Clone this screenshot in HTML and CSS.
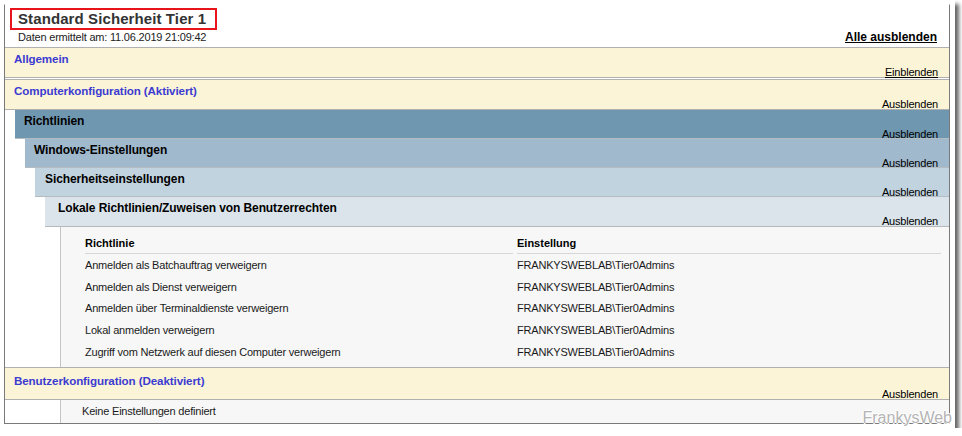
FILE: index.html
```html
<!DOCTYPE html>
<html lang="de">
<head>
    <meta charset="UTF-8">
    <title>Standard Sicherheit Tier 1</title>
    <link rel="stylesheet" href="styles.css">
</head>
<body>
    <div class="shot">
        <div class="report">
            <div class="title-box">Standard Sicherheit Tier 1</div>
            <div class="head-row">
                <span class="stamp">Daten ermittelt am: 11.06.2019 21:09:42</span>
                <a class="toggle-all" href="#">Alle ausblenden</a>
            </div>

            <div class="bar bar-cat">
                <div class="bar-title cat-title">Allgemein</div>
                <div class="expando"><a class="show" href="#">Einblenden</a></div>
            </div>

            <div class="bar bar-cat bar-gap">
                <div class="bar-title cat-title">Computerkonfiguration (Aktiviert)</div>
                <div class="expando">Ausblenden</div>
            </div>
            <div class="nest">
                <div class="bar lvl1">
                    <div class="bar-title">Richtlinien</div>
                    <div class="expando">Ausblenden</div>
                </div>
                <div class="nest">
                    <div class="bar lvl2">
                        <div class="bar-title">Windows-Einstellungen</div>
                        <div class="expando">Ausblenden</div>
                    </div>
                    <div class="nest">
                        <div class="bar lvl3">
                            <div class="bar-title">Sicherheitseinstellungen</div>
                            <div class="expando">Ausblenden</div>
                        </div>
                        <div class="nest">
                            <div class="bar lvl4">
                                <div class="bar-title">Lokale Richtlinien/Zuweisen von Benutzerrechten</div>
                                <div class="expando">Ausblenden</div>
                            </div>
                            <div class="content">
                                <table class="info">
                                    <tr><th>Richtlinie</th><th>Einstellung</th></tr>
                                    <tr><td>Anmelden als Batchauftrag verweigern</td><td>FRANKYSWEBLAB\Tier0Admins</td></tr>
                                    <tr><td>Anmelden als Dienst verweigern</td><td>FRANKYSWEBLAB\Tier0Admins</td></tr>
                                    <tr><td>Anmelden über Terminaldienste verweigern</td><td>FRANKYSWEBLAB\Tier0Admins</td></tr>
                                    <tr><td>Lokal anmelden verweigern</td><td>FRANKYSWEBLAB\Tier0Admins</td></tr>
                                    <tr><td>Zugriff vom Netzwerk auf diesen Computer verweigern</td><td>FRANKYSWEBLAB\Tier0Admins</td></tr>
                                </table>
                            </div>
                        </div>
                    </div>
                </div>
            </div>

            <div class="bar bar-cat bar-user">
                <div class="bar-title cat-title">Benutzerkonfiguration (Deaktiviert)</div>
                <div class="expando">Ausblenden</div>
            </div>
            <div class="empty">Keine Einstellungen definiert</div>
        </div>
        <div class="watermark">FrankysWeb</div>
    </div>
</body>
</html>
```

FILE: styles.css
```css
body {
    margin: 0;
    background: #fff;
    font-family: "Liberation Sans", Arial, sans-serif;
    font-size: 11px;
    letter-spacing: -0.2px;
    color: #000;
}
.shot {
    position: relative;
    width: 955px;
    height: 428px;
    background: #fff;
    box-shadow: 4px 4px 4px rgba(0, 0, 0, 0.6);
}
.report {
    position: absolute;
    left: 4px;
    top: 4px;
    width: 944px;
    height: 418px;
    border: 1px solid #7a7a7a;
    border-top-color: #fff;
    background: #fff;
    overflow: hidden;
}
.title-box {
    width: fit-content;
    margin: 3px 0 0 5px;
    padding: 0 9px 0 6px;
    height: 18px;
    line-height: 18px;
    border: 2px solid #e8141b;
    font-size: 15px;
    font-weight: bold;
    color: #333;
    letter-spacing: 0.1px;
}
.head-row {
    display: flex;
    justify-content: space-between;
    align-items: baseline;
    height: 17px;
    padding: 0 12px 0 13px;
    line-height: 15px;
}
.stamp {
    color: #222;
}
.toggle-all {
    font-size: 12px;
    font-weight: bold;
    letter-spacing: 0;
    color: #000;
    text-decoration: underline;
}
.bar {
    height: 28px;
    padding: 0 11px 0 9px;
    border-bottom: 1px solid #b4bcc2;
}
.bar-title {
    padding-top: 4px;
    height: 14px;
    line-height: 14px;
    font-size: 12px;
    font-weight: bold;
    letter-spacing: -0.1px;
    white-space: nowrap;
}
.expando {
    text-align: right;
    line-height: 12px;
    color: #000;
}
.expando a {
    color: #000;
    text-decoration: underline;
}
.bar-cat {
    height: 29px;
    background: #fcf4d6;
    border-top: 1px solid #b0b0b0;
    border-bottom: 1px solid #b0b0b0;
}
.bar-gap {
    margin-top: 1px;
}
.cat-title {
    font-size: 11.6px;
    color: #3b3bd2;
}
.nest {
    margin-left: 10px;
}
.lvl1 {
    background: #7097b0;
}
.lvl2 {
    background: #a1b9cc;
}
.lvl3 {
    background: #c1d3df;
    padding-left: 10px;
}
.lvl4 {
    height: 29px;
    background: #dae4ea;
    padding-left: 13px;
    border-bottom-color: #b8b8b8;
}
.content {
    height: 135px;
    margin-left: 15px;
    padding-top: 5px;
    background: #f7f7f7;
    border-left: 1px solid #c4c4c4;
}
.info {
    margin-left: 20px;
    border-collapse: separate;
    border-spacing: 4px 0;
}
.info th {
    width: 428px;
    height: 21px;
    padding: 0;
    text-align: left;
    font-weight: bold;
    letter-spacing: 0;
    border-bottom: 1px solid #d6d6d6;
}
.info th + th {
    width: 424px;
}
.info td {
    height: 20.6px;
    padding: 1px 0 0;
    line-height: 14px;
    color: #1a1a1a;
}
.bar-user {
    height: 31px;
}
.bar-user .bar-title {
    padding-top: 6px;
}
.empty {
    margin-left: 55px;
    height: 23px;
    line-height: 22px;
    padding-left: 21px;
    background: #f7f7f7;
    border-left: 1px solid #c4c4c4;
    color: #1a1a1a;
}
.watermark {
    position: absolute;
    right: 3px;
    top: 409px;
    font-size: 16px;
    line-height: 18px;
    letter-spacing: 0;
    color: #b4b4b4;
    text-shadow: 1px 0 0 #fff, -1px 0 0 #fff, 0 1px 0 #fff, 0 -1px 0 #fff;
}
```
